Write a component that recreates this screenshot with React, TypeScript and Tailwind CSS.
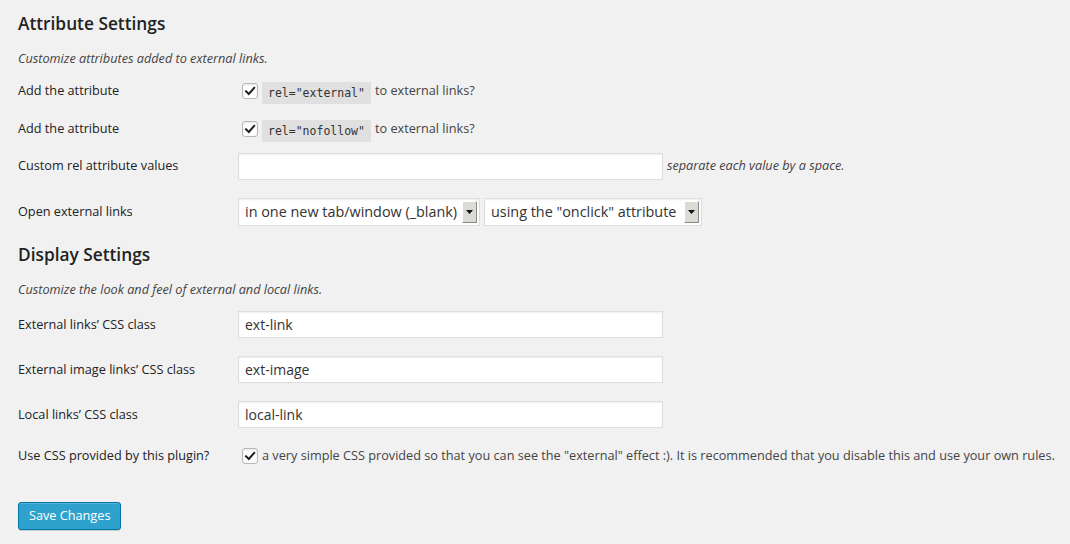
import React from 'react';

// Case à cocher au style WordPress 3.8
const Check = () => (
  <span className="inline-flex w-4 h-4 shrink-0 items-center justify-center rounded-[3px] border border-[#b4b9be] bg-[#fefefe] shadow-[inset_0_1px_2px_rgba(0,0,0,0.1)]">
    <svg width="12" height="12" viewBox="0 0 12 12" fill="none">
      <path d="M2 6.3 L4.8 9 L10.2 2.8" stroke="#1f1f1f" strokeWidth="2" strokeLinecap="square" />
    </svg>
  </span>
);

// Faux select avec le petit bouton gris à droite
const FakeSelect = ({ text, width }: { text: string; width: string }) => (
  <div className={`flex h-[28px] ${width} items-center justify-between border border-[#ddd] bg-white pl-[6px] pr-[2px] text-[14.4px] text-[#333] shadow-[inset_0_1px_2px_rgba(0,0,0,0.07)]`}>
    <span className="whitespace-nowrap">{text}</span>
    <span className="flex h-[22px] w-[15px] items-center justify-center border-t border-l border-t-white border-l-white border-r border-b border-r-[#888] border-b-[#888] bg-[#dcdad5]">
      <svg width="7" height="4" viewBox="0 0 7 4">
        <path d="M0 0 H7 L3.5 4 Z" fill="#111" />
      </svg>
    </span>
  </div>
);

const TextInput = ({ value }: { value?: string }) => (
  <input
    readOnly
    defaultValue={value}
    className="h-[27px] w-[425px] border border-[#ddd] bg-white px-[6px] text-[14px] text-[#333] shadow-[inset_0_1px_2px_rgba(0,0,0,0.07)] outline-none font-['Open_Sans',sans-serif]"
  />
);

const Code = ({ children }: { children: React.ReactNode }) => (
  <code className="bg-[rgba(0,0,0,0.07)] px-[6px] py-[4px] text-[11.5px] text-[#333] font-['DejaVu_Sans_Mono',monospace]">
    {children}
  </code>
);

const Row = ({ label, height, children }: { label: string; height: string; children: React.ReactNode }) => (
  <div className={`flex ${height} items-center`}>
    <div className="w-[220px] shrink-0 text-[12.7px] text-[#222]">{label}</div>
    <div className="flex items-center">{children}</div>
  </div>
);

const App: React.FC = () => {
  return (
    <div className="min-h-screen bg-[#f1f1f1] px-[18px] pt-[12px] font-['Open_Sans',sans-serif] text-[#444]">
      <h3 className="text-[17.3px] leading-[24px] font-semibold text-[#222]">Attribute Settings</h3>
      <p className="mt-[12px] text-[12.7px] leading-[20px] italic">Customize attributes added to external links.</p>

      <div className="mt-[4px]">
        <Row label="Add the attribute" height="h-[38px]">
          <span className="ml-[4px]"><Check /></span>
          <span className="ml-[4px]"><Code>rel="external"</Code></span>
          <span className="ml-[4px] text-[12.7px]">to external links?</span>
        </Row>
        <Row label="Add the attribute" height="h-[37px]">
          <span className="ml-[4px]"><Check /></span>
          <span className="ml-[4px]"><Code>rel="nofollow"</Code></span>
          <span className="ml-[4px] text-[12.7px]">to external links?</span>
        </Row>
        <Row label="Custom rel attribute values" height="h-[38px]">
          <TextInput />
          <span className="ml-[4px] text-[12.7px] italic">separate each value by a space.</span>
        </Row>
        <Row label="Open external links" height="h-[54px]">
          <FakeSelect text="in one new tab/window (_blank)" width="w-[242px]" />
          <span className="ml-[4px]">
            <FakeSelect text={'using the "onclick" attribute'} width="w-[218px]" />
          </span>
        </Row>
      </div>

      <h3 className="mt-[4px] text-[17.3px] leading-[24px] font-semibold text-[#222]">Display Settings</h3>
      <p className="mt-[12px] text-[12.7px] leading-[20px] italic">Customize the look and feel of external and local links.</p>

      <div className="mt-[3px]">
        <Row label="External links’ CSS class" height="h-[45px]">
          <TextInput value="ext-link" />
        </Row>
        <Row label="External image links’ CSS class" height="h-[45px]">
          <TextInput value="ext-image" />
        </Row>
        <Row label="Local links’ CSS class" height="h-[45px]">
          <TextInput value="local-link" />
        </Row>
        <Row label="Use CSS provided by this plugin?" height="h-[38px]">
          <span className="ml-[4px]"><Check /></span>
          <span className="ml-[4px] text-[12.7px] whitespace-nowrap">
            a very simple CSS provided so that you can see the "external" effect :). It is recommended that you disable this and use your own rules.
          </span>
        </Row>
      </div>

      <button className="mt-[27px] h-[28px] rounded-[3px] border border-[#0074a2] bg-[#2ea2cc] px-[10px] text-[12.7px] text-white shadow-[inset_0_1px_0_rgba(120,200,230,0.5),0_1px_0_rgba(0,0,0,0.15)]">
        Save Changes
      </button>
    </div>
  );
};

export default App;
